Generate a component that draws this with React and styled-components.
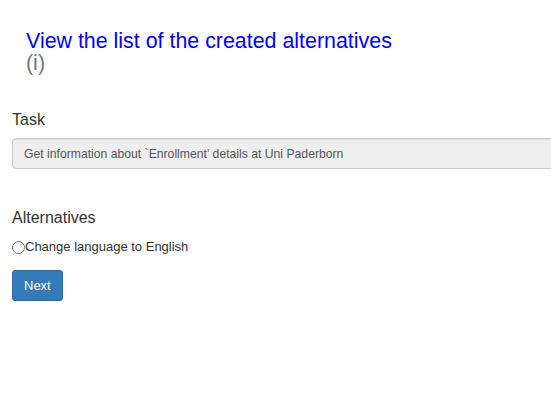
import styled, { createGlobalStyle } from "styled-components";

const GlobalStyle = createGlobalStyle`
    html, body {
        margin: 0;
        padding: 0;
        background: #fff;
        overflow-x: hidden;
        font-family: "Liberation Sans", Arial, sans-serif;
        color: #333;
    }
`;

const Page = styled.div`
    display: flex;
    flex-direction: column;
    padding: 30px 0 0 12px;
`;

const Header = styled.div`
    display: flex;
    flex-direction: column;
    padding-left: 14px;
    font-size: 21.4px;
    line-height: 22px;
`;

const Title = styled.span`
    color: #0000ff;
`;

const Info = styled.span`
    color: #777;
`;

const Label = styled.div`
    font-size: 16px;
    line-height: 20px;
    margin-top: ${(p) => p.$top}px;
`;

const ReadonlyField = styled.div`
    box-sizing: border-box;
    width: 560px;
    height: 31px;
    margin-top: 8px;
    padding: 0 11px;
    display: flex;
    align-items: center;
    background: #eee;
    border: 1px solid #ccc;
    border-radius: 4px;
    box-shadow: inset 0 1px 1px rgba(0, 0, 0, 0.075);
    color: #555;
    font-size: 12.2px;
`;

const Option = styled.label`
    display: flex;
    align-items: center;
    margin-top: 10px;
    font-size: 13px;
    line-height: 18px;
    color: #333;
`;

const Radio = styled.input`
    margin: 0;
    width: 13px;
    height: 13px;
`;

const Button = styled.button`
    align-self: flex-start;
    margin-top: 14px;
    height: 31px;
    padding: 0 11px;
    background: #337ab7;
    border: 1px solid #2e6da4;
    border-radius: 3px;
    color: #fff;
    font-family: inherit;
    font-size: 13px;
    cursor: pointer;
`;

export default function App() {
    return (
        <>
            <GlobalStyle />
            <Page>
                <Header>
                    <Title>View the list of the created alternatives</Title>
                    <Info>(i)</Info>
                </Header>
                <Label $top={36}>Task</Label>
                <ReadonlyField>Get information about `Enrollment' details at Uni Paderborn</ReadonlyField>
                <Label $top={39}>Alternatives</Label>
                <Option>
                    <Radio type="radio" name="alt" />
                    Change language to English
                </Option>
                <Button>Next</Button>
            </Page>
        </>
    );
}
